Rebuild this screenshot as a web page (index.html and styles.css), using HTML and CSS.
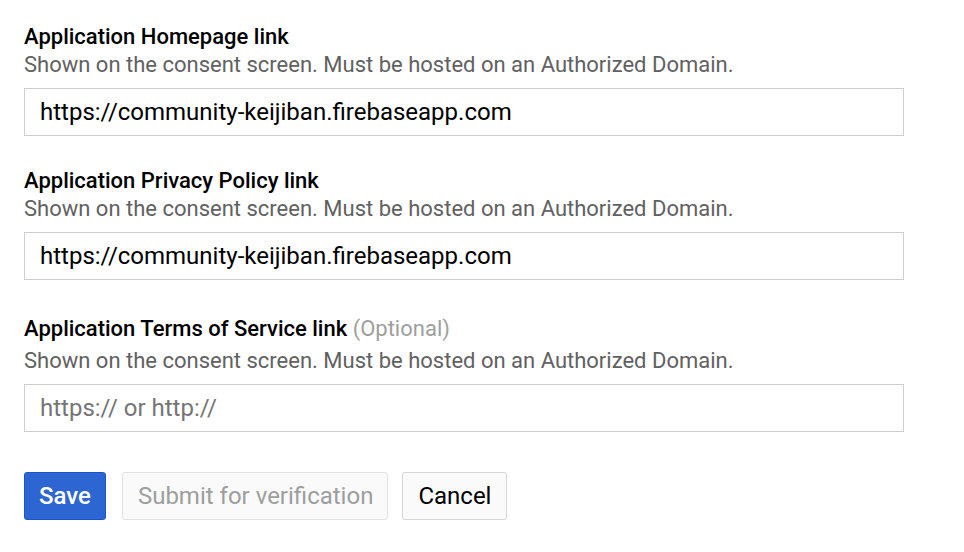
FILE: index.html
```html
<!DOCTYPE html>
<html>
<head>
<meta charset="utf-8">
<link rel="stylesheet" href="styles.css">
</head>
<body>
<form class="form">
  <div class="field">
    <div class="label">Application Homepage link</div>
    <div class="help">Shown on the consent screen. Must be hosted on an Authorized Domain.</div>
    <input class="input" type="text" value="https://community-keijiban.firebaseapp.com">
  </div>
  <div class="field">
    <div class="label">Application Privacy Policy link</div>
    <div class="help">Shown on the consent screen. Must be hosted on an Authorized Domain.</div>
    <input class="input" type="text" value="https://community-keijiban.firebaseapp.com">
  </div>
  <div class="field field-opt">
    <div class="label">Application Terms of Service link <span class="opt">(Optional)</span></div>
    <div class="help">Shown on the consent screen. Must be hosted on an Authorized Domain.</div>
    <input class="input" type="text" placeholder="https:// or http://">
  </div>
  <div class="actions">
    <button type="button" class="btn btn-primary">Save</button>
    <button type="button" class="btn btn-disabled">Submit for verification</button>
    <button type="button" class="btn btn-default">Cancel</button>
  </div>
</form>
</body>
</html>
```
FILE: styles.css
```css
html, body {
  margin: 0;
  padding: 0;
  background: #fff;
}
body {
  font-family: Roboto, "Liberation Sans", sans-serif;
  color: #000;
}
.form {
  padding: 23px 0 0 24px;
  width: 880px;
}
.field {
  margin-bottom: 31px;
}
.field-opt {
  padding-top: 4px;
  margin-bottom: 40px;
}
.label {
  font-size: 22px;
  font-weight: 500;
  line-height: 28px;
  color: #000;
}
.opt {
  font-weight: 400;
  color: #9e9e9e;
}
.help {
  font-size: 22px;
  line-height: 28px;
  color: #616161;
  margin-bottom: 9px;
}
.field-opt .help {
  margin-top: 4px;
}
.input {
  display: block;
  box-sizing: border-box;
  width: 880px;
  height: 48px;
  margin: 0;
  padding: 0 15px;
  border: 1px solid #cfcfcf;
  border-radius: 0;
  font-family: Roboto, "Liberation Sans", sans-serif;
  font-size: 24px;
  color: #000;
  outline: none;
}
.input::placeholder {
  color: #757575;
}
.actions {
  display: flex;
  gap: 16px;
}
.btn {
  box-sizing: border-box;
  height: 48px;
  padding: 0 15px;
  border-radius: 3px;
  font-family: Roboto, "Liberation Sans", sans-serif;
  font-size: 24px;
  cursor: pointer;
}
.btn-primary {
  background: #2d65d2;
  border: 1px solid #1a56c8;
  color: #fff;
  font-weight: 500;
  padding: 0 14px;
}
.btn-disabled {
  background: #fafafa;
  border: 1px solid #e2e2e2;
  color: #9e9e9e;
  padding: 0 14px 0 15px;
}
.btn-default {
  background: #fafafa;
  border: 1px solid #d6d6d6;
  color: #000;
  margin-left: -2px;
}
```
